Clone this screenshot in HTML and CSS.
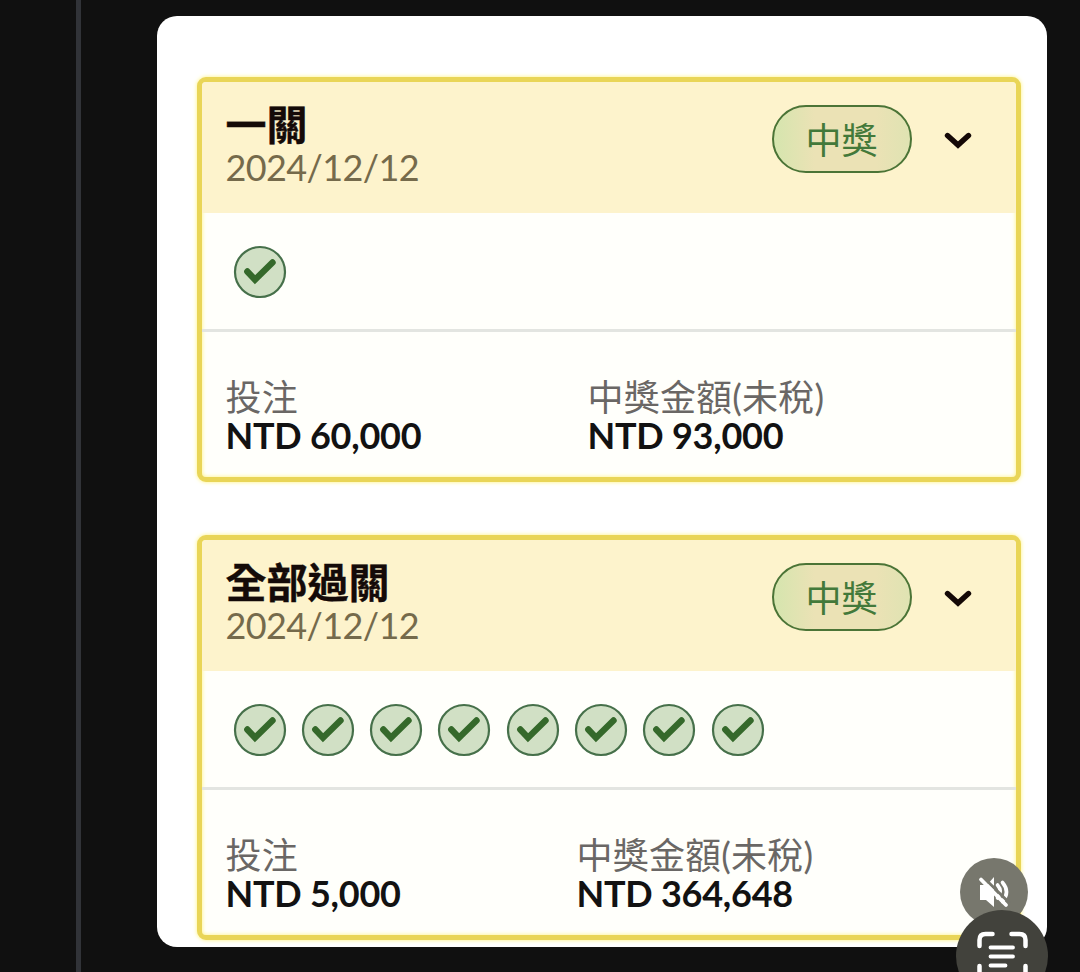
FILE: index.html
```html
<!DOCTYPE html>
<html lang="zh-Hant">
<head>
  <meta charset="UTF-8">
  <meta name="viewport" content="width=device-width, initial-scale=1.0">
  <title>中獎</title>
  <link rel="stylesheet" href="styles.css">
</head>
<body>

  <!-- Shared icons -->
  <svg class="icon-defs" width="0" height="0">
    <symbol id="check" viewBox="0 0 54 54">
      <circle cx="27" cy="27" r="25" fill="#d1e0c5" stroke="#46704a" stroke-width="2.2"/>
      <path d="M14.300 26.500l7.700 8.200L39.500 17.500" fill="none" stroke="#35692b" stroke-width="6.4" stroke-linecap="round" stroke-linejoin="miter"/>
    </symbol>
    <symbol id="chevron" viewBox="0 0 28 18">
      <path d="M3.500 3.500L14 13 24.500 3.500" fill="none" stroke="#140806" stroke-width="5.4" stroke-linecap="round" stroke-linejoin="miter"/>
    </symbol>
  </svg>

  <div class="thread-line"></div>

  <div class="photo">
    <!-- Ticket 1 -->
    <div class="ticket">
      <div class="ticket-header">
        <div class="ticket-name">
          <h2>一關</h2>
          <p class="date">2024/12/12</p>
        </div>
        <span class="badge">中獎</span>
        <svg class="chevron"><use href="#chevron"/></svg>
      </div>
      <div class="legs">
        <svg class="check"><use href="#check"/></svg>
      </div>
      <div class="amounts">
        <div class="stake">
          <p class="label">投注</p>
          <p class="value">NTD 60,000</p>
        </div>
        <div class="payout">
          <p class="label">中獎金額(未稅)</p>
          <p class="value">NTD 93,000</p>
        </div>
      </div>
    </div>

    <!-- Ticket 2 -->
    <div class="ticket">
      <div class="ticket-header">
        <div class="ticket-name">
          <h2>全部過關</h2>
          <p class="date">2024/12/12</p>
        </div>
        <span class="badge">中獎</span>
        <svg class="chevron"><use href="#chevron"/></svg>
      </div>
      <div class="legs">
        <svg class="check"><use href="#check"/></svg>
        <svg class="check"><use href="#check"/></svg>
        <svg class="check"><use href="#check"/></svg>
        <svg class="check"><use href="#check"/></svg>
        <svg class="check"><use href="#check"/></svg>
        <svg class="check"><use href="#check"/></svg>
        <svg class="check"><use href="#check"/></svg>
        <svg class="check"><use href="#check"/></svg>
      </div>
      <div class="amounts">
        <div class="stake stake-short">
          <p class="label">投注</p>
          <p class="value">NTD 5,000</p>
        </div>
        <div class="payout">
          <p class="label">中獎金額(未稅)</p>
          <p class="value">NTD 364,648</p>
        </div>
      </div>
    </div>
  </div>

  <!-- Floating buttons -->
  <div class="mute-btn">
    <svg width="68" height="68" viewBox="0 0 68 68">
      <path d="M20 27h7l7-8v30l-8-7h-6z" fill="#fff"/>
      <path d="M37.500 27q5.500 6.500 0 13M42.500 24.500q8 9.500 0 19" fill="none" stroke="#fff" stroke-width="3.6" stroke-linecap="round"/>
      <path d="M23 19L49.500 45" stroke="#77776d" stroke-width="3"/>
      <path d="M21 21.500L46 47" stroke="#fff" stroke-width="3.800" stroke-linecap="round"/>
    </svg>
  </div>
  <div class="scan-btn">
    <svg width="92" height="92" viewBox="0 0 92 92">
      <g fill="none" stroke="#fff" stroke-linecap="round">
        <path d="M23.500 36v-6q0-6 6-6h7M55.500 24h8q6 0 6 6v6M23.500 56v6q0 6 6 6h7M55.500 68h8q6 0 6-6v-6" stroke-width="4.500"/>
        <path d="M34.500 37.500h22.500M34.500 46.500h22.500M34.500 55.500h15" stroke-width="3.800"/>
      </g>
    </svg>
  </div>

</body>
</html>
```

FILE: styles.css
```css
/* General Styles */
* {
  box-sizing: border-box;
}

body {
  display: flex;
  height: 972px;
  margin: 0;
  background-color: #101010;
  font-family: Lato, "Noto Sans CJK TC", sans-serif;
  overflow: hidden;
  position: relative;
}

h2, p {
  margin: 0;
}

.icon-defs {
  position: absolute;
}

.thread-line {
  width: 5px;
  height: 100%;
  margin-left: 76px;
  background: #313338;
}

.photo {
  width: 890px;
  height: 931px;
  margin: 15.500px 0 0 75.500px;
  padding: 61.500px 26px 0 40px;
  background: #fff;
  border-radius: 20px;
  overflow: hidden;
}

/* Ticket */
.ticket {
  height: 405px;
  margin-bottom: 52.500px;
  background: #fffffb;
  border: 5px solid #e9d557;
  border-radius: 9px;
  box-shadow: 0 0 4px #fff27a, inset 0 0 4px #fff27a;
}

.ticket-header {
  display: flex;
  height: 131px;
  padding: 23px 44px 0 24px;
  background: #fdf3cc;
  border-radius: 4px 4px 0 0;
}

.ticket-name {
  flex: 1;
}

.ticket h2 {
  font-size: 41px;
  line-height: 40px;
  font-weight: 700;
  color: #140a08;
  -webkit-text-stroke: 0.4px #140a08;
}

.date {
  font-size: 36px;
  line-height: 44px;
  letter-spacing: -0.6px;
  color: #756a4b;
}

.badge {
  width: 140px;
  height: 68px;
  border: 2.500px solid #4b7436;
  border-radius: 34px;
  background: linear-gradient(90deg, #d5e5ae, #ebe2b5 30%, #ebe2b5 75%, #dfe3b2);
  color: #43793a;
  font-size: 36px;
  line-height: 66px;
  text-align: center;
}

.chevron {
  width: 28px;
  height: 18px;
  margin: 27px 0 0 32px;
}

/* Result of each leg */
.legs {
  display: flex;
  align-items: center;
  gap: 14.300px;
  height: 119px;
  padding: 2px 0 0 31px;
  border-bottom: 3px solid #e3e5e1;
}

.check {
  width: 54px;
  height: 54px;
}

/* Amounts */
.amounts {
  display: flex;
  padding: 45px 0 0 24px;
}

.stake {
  width: 362px;
}

.stake-short {
  width: 351px;
}

.label {
  font-size: 36px;
  line-height: 40px;
  letter-spacing: 0.2px;
  color: #6a6765;
}

.value {
  font-size: 36px;
  line-height: 37px;
  font-weight: 700;
  letter-spacing: -0.25px;
  color: #121212;
}

/* Floating buttons */
.mute-btn, .scan-btn {
  position: absolute;
  border-radius: 50%;
}

.mute-btn {
  left: 960px;
  top: 858px;
  width: 68px;
  height: 68px;
  background: #77776d;
}

.scan-btn {
  left: 956px;
  top: 910px;
  width: 92px;
  height: 92px;
  background: #42423c;
}
```
